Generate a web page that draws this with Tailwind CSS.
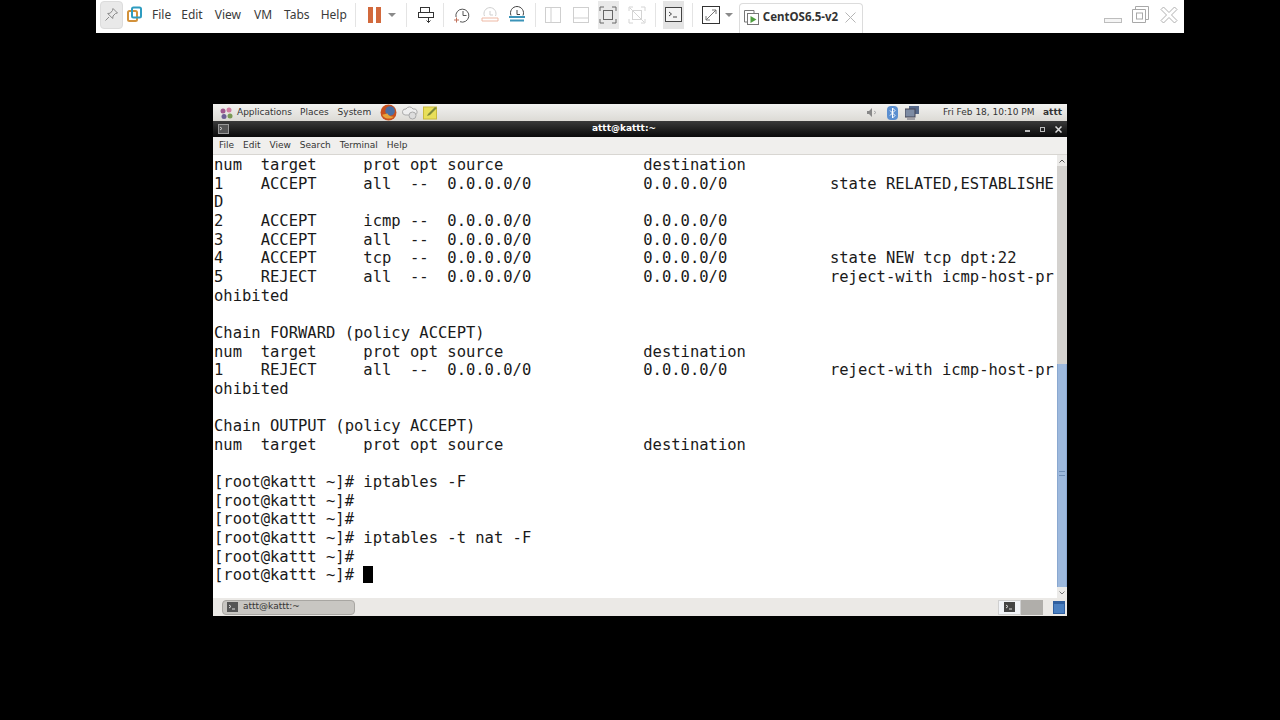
<!DOCTYPE html>
<html lang="en">
<head>
  <meta charset="UTF-8">
  <title>CentOS6.5-v2</title>
  <script src="https://cdn.jsdelivr.net/npm/@tailwindcss/browser@4"></script>
</head>
<body class="bg-black h-[720px] w-[1280px] overflow-hidden font-['Noto_Sans',sans-serif]">

  <!-- vmware toolbar -->
  <div class="w-[1088px] h-[33px] ml-[96px] pb-[4px] bg-white flex items-center text-[12px] text-[#3a3a3a]">
    <div class="w-[23px] h-[28px] ml-[4px] bg-[#e9e9e9] border border-[#dcdcdc] rounded-sm flex items-center justify-center">
      <svg width="15" height="15" viewBox="0 0 15 15" fill="none" stroke="#8a8a8a"><path d="M9 1.500l4.500 4.500-2 .5-2.500 2.500-.3 2.500-5-5 2.500-.3L8.500 3.500z M5 10l-3.500 3.500"/></svg>
    </div>
    <svg class="ml-[4px]" width="15" height="17" viewBox="0 0 15 17" fill="none"><rect x="1" y="5" width="9" height="10" rx="1.500" stroke="#d2913a" stroke-width="2"/><rect x="5" y="1.500" width="9" height="10" rx="1.500" stroke="#2e9cc0" stroke-width="2"/></svg>
    <span class="ml-[10px]">File</span>
    <span class="ml-[10px]">Edit</span>
    <span class="ml-[12px]">View</span>
    <span class="ml-[13px]">VM</span>
    <span class="ml-[12px]">Tabs</span>
    <span class="ml-[11px]">Help</span>
    <div class="w-px h-[24px] bg-[#e4e4e4] ml-[8px]"></div>
    <div class="flex gap-[3px] ml-[12px]"><div class="w-[5px] h-[16px] bg-[#d2693c]"></div><div class="w-[5px] h-[16px] bg-[#d2693c]"></div></div>
    <div class="ml-[7px] w-0 h-0 border-x-[4px] border-x-transparent border-t-[4px] border-t-[#8a8a8a]"></div>
    <div class="w-px h-[24px] bg-[#e4e4e4] ml-[10px]"></div>
    <svg class="ml-[10px]" width="18" height="18" viewBox="0 0 18 18" fill="none" stroke="#333"><rect x="3.500" y="1.500" width="9" height="5"/><rect x="1.500" y="6.500" width="15" height="5"/><path d="M11.500 11.500v5M9.500 14.500l2 2 2-2"/></svg>
    <div class="w-px h-[24px] bg-[#e4e4e4] ml-[8px]"></div>
    <svg class="ml-[9px]" width="18" height="18" viewBox="0 0 18 18" fill="none" stroke="#555"><path d="M3 11a6.500 6.500 0 1 1 4 4.700M10 5v4.500h3.500"/><path d="M1 14h5M3.500 11.500v5" stroke="#c0705a"/></svg>
    <svg class="ml-[10px]" width="18" height="18" viewBox="0 0 18 18" fill="none" stroke="#cfcfcf"><path d="M3.500 10a6 6 0 1 1 11 0M9 5v4h3"/><path d="M1 12h16v3H1z" stroke="#eeb9a5"/></svg>
    <svg class="ml-[9px]" width="18" height="18" viewBox="0 0 18 18" fill="none" stroke="#444"><path d="M3 9.500a6.500 6.500 0 1 1 12 0M9 4v4.500h3"/><path d="M1 11h16M2 14.500h14" stroke="#3b93b8" stroke-width="2"/></svg>
    <div class="w-px h-[24px] bg-[#e4e4e4] ml-[9px]"></div>
    <svg class="ml-[8px]" width="18" height="18" viewBox="0 0 18 18" fill="none" stroke="#cfcfcf"><rect x="1.500" y="1.500" width="15" height="15"/><path d="M7 1.500v15"/></svg>
    <svg class="ml-[10px]" width="18" height="18" viewBox="0 0 18 18" fill="none" stroke="#cfcfcf"><rect x="1.500" y="1.500" width="15" height="15"/><path d="M1.500 12h15"/></svg>
    <div class="ml-[8px] w-[21px] h-[28px] bg-[#e9e9e9] flex items-center justify-center">
      <svg width="18" height="18" viewBox="0 0 18 18" fill="none" stroke="#666"><rect x="4.500" y="4.500" width="9" height="9"/><path d="M1 5V1h4M13 1h4v4M17 13v4h-4M5 17H1v-4"/></svg>
    </div>
    <svg class="ml-[9px]" width="18" height="18" viewBox="0 0 18 18" fill="none" stroke="#d4d4d4"><rect x="4.500" y="4.500" width="9" height="9"/><path d="M1 5V1h4M13 1h4v4M17 13v4h-4M5 17H1v-4M2 2l14 14"/></svg>
    <div class="w-px h-[24px] bg-[#e4e4e4] ml-[9px]"></div>
    <div class="ml-[7px] w-[21px] h-[28px] bg-[#e4e4e4] flex items-center justify-center">
      <svg width="17" height="15" viewBox="0 0 17 15" fill="none" stroke="#444"><rect x=".5" y=".5" width="16" height="14" fill="#f4f4f4"/><path d="M4 5l2.500 2L4 9M8 10h4"/></svg>
    </div>
    <div class="w-px h-[24px] bg-[#e4e4e4] ml-[8px]"></div>
    <svg class="ml-[9px]" width="18" height="18" viewBox="0 0 18 18" fill="none" stroke="#333"><rect x=".5" y=".5" width="17" height="17"/><path d="M4 14L14 4M10 4h4v4M4 10v4h4" stroke="#777"/></svg>
    <div class="ml-[5px] w-0 h-0 border-x-[4px] border-x-transparent border-t-[4px] border-t-[#8a8a8a]"></div>
    <div class="ml-[6px] w-[124px] h-[30px] self-end -mb-[4px] pb-[3px] border border-b-0 border-[#dcdcdc] rounded-t-sm flex items-center pl-[3px]">
      <svg width="17" height="17" viewBox="0 0 17 17" fill="none"><path d="M4 13H1.500V1.500H11V4" stroke="#777"/><rect x="4.500" y="4.500" width="11" height="11" stroke="#777"/><path d="M7.500 7v7l6-3.500z" fill="#4f9e3f"/></svg>
      <span class="ml-[3px] w-[82px] whitespace-nowrap font-bold text-[11.5px] text-[#333]">CentOS6.5-v2</span>
      <svg width="11" height="11" viewBox="0 0 11 11" stroke="#b5b5b5"><path d="M.5.5l10 10M10.500.5l-10 10"/></svg>
    </div>
    <div class="ml-auto flex items-center">
      <div class="w-[18px] h-[5px] mt-[11px] border border-[#bdbdbd] bg-[#f5f5f5]"></div>
      <svg class="ml-[10px]" width="17" height="17" viewBox="0 0 17 17" fill="none" stroke="#a8a8a8"><path d="M.5 3.500h13v13H.5zM3.500 3.500V.5h13v13h-3"/><rect x="4.500" y="7" width="6" height="6"/></svg>
      <svg class="ml-[11px] mr-[6px]" width="18" height="18" viewBox="0 0 18 18" fill="#fff" stroke="#b0b0b0"><path d="M1 3.500L3.500 1 9 6.500 14.500 1 17 3.500 11.500 9 17 14.500 14.500 17 9 11.500 3.500 17 1 14.500 6.500 9z"/></svg>
    </div>
  </div>

  <!-- guest desktop -->
  <div class="w-[854px] h-[512px] ml-[213px] mt-[71px] flex flex-col bg-white">

    <!-- gnome panel -->
    <div class="h-[17px] bg-gradient-to-b from-[#f2f2f0] to-[#dcdad5] flex items-center text-[9px] text-[#333] font-['DejaVu_Sans',sans-serif]">
      <svg class="ml-[6px]" width="15" height="14" viewBox="0 0 15 14"><circle cx="4" cy="5" r="2.500" fill="#a0588f"/><circle cx="10" cy="4" r="2.500" fill="#d07ca0"/><circle cx="5" cy="10.500" r="2.500" fill="#6d5f95"/><circle cx="11" cy="10" r="2.500" fill="#7a9a55"/></svg>
      <span class="ml-[3px]">Applications</span>
      <span class="ml-[8px]">Places</span>
      <span class="ml-[9px]">System</span>
      <svg class="ml-[9px]" width="17" height="17" viewBox="0 0 16 16"><circle cx="8" cy="8" r="7.500" fill="#c8501e"/><circle cx="9.500" cy="6.500" r="4.500" fill="#4a6fa5"/><path d="M2 10c2 4 8 5 11 2-3 0-5-1-6-3z" fill="#e8a33a"/></svg>
      <svg class="ml-[5px]" width="16" height="15" viewBox="0 0 16 15" fill="#eee" stroke="#aaa"><path d="M3 10a3 3 0 0 1 1-6 4 4 0 0 1 7 0 3 3 0 0 1 2 6z"/><circle cx="10.500" cy="10.500" r="3.500" fill="#ddd"/></svg>
      <svg class="ml-[5px]" width="15" height="15" viewBox="0 0 15 15"><rect x=".5" y="2" width="13" height="12" fill="#e8df5a" stroke="#c9b93c"/><path d="M5 9l7-7 2 1-7 7-3 1z" fill="#7d8a3a"/></svg>
      <div class="ml-auto flex items-center mr-[5px]">
        <svg width="11" height="13" viewBox="0 0 11 13"><path d="M1 5h2l3-3v9L3 8H1z" fill="#888"/><path d="M8 5l2 1.500L8 8" stroke="#aaa" fill="none"/></svg>
        <svg class="ml-[10px]" width="11" height="14" viewBox="0 0 11 14"><rect width="11" height="14" rx="4" fill="#5b8fd0"/><path d="M3 4.500l5 5L5.500 12V2L8 4.500l-5 5" stroke="#fff" fill="none"/></svg>
        <svg class="ml-[7px]" width="14" height="14" viewBox="0 0 14 14"><rect x="4" y="0" width="10" height="8" fill="#56698a"/><rect x="0" y="3" width="10" height="8" fill="#7d8ba3" stroke="#445"/><path d="M2 13h8" stroke="#667"/></svg>
        <span class="ml-[24px] w-[87px] whitespace-nowrap">Fri Feb 18, 10:10 PM</span>
        <span class="ml-[13px] font-bold">attt</span>
      </div>
    </div>

    <!-- title bar -->
    <div class="h-[16px] bg-gradient-to-b from-[#3a3a3a] to-[#0a0a0a] flex items-center text-white text-[9px] font-bold font-['DejaVu_Sans',sans-serif]">
      <svg class="ml-[5px]" width="11" height="10" viewBox="0 0 11 10"><rect x=".5" y=".5" width="10" height="9" fill="#555" stroke="#999"/><path d="M2 3l2 1.500L2 6" stroke="#ccc" fill="none"/></svg>
      <span class="flex-1 text-center pr-[6px]">attt@kattt:~</span>
      <div class="flex items-center gap-[10px] mr-[5px]">
        <div class="w-[5px] h-[1.500px] bg-[#bbb] mt-[4px]"></div>
        <div class="w-[5px] h-[5px] border border-[#bbb]"></div>
        <svg width="7" height="7" viewBox="0 0 7 7" stroke="#ddd" stroke-width="1.500"><path d="M.5.5l6 6M6.500.5l-6 6"/></svg>
      </div>
    </div>

    <!-- terminal menu -->
    <div class="h-[18px] bg-[#f0efed] border-b border-[#d8d6d2] flex items-center pl-[6px] gap-[9px] text-[9px] text-[#333] font-['DejaVu_Sans',sans-serif]">
      <span>File</span><span>Edit</span><span>View</span><span>Search</span><span>Terminal</span><span>Help</span>
    </div>

    <!-- terminal body -->
    <div class="h-[443px] flex">
      <pre class="flex-1 pl-px pt-px text-[15.5px] leading-[18.66px] text-[#1a1a1a] font-['DejaVu_Sans_Mono',monospace]">num  target     prot opt source               destination
1    ACCEPT     all  --  0.0.0.0/0            0.0.0.0/0           state RELATED,ESTABLISHE
D
2    ACCEPT     icmp --  0.0.0.0/0            0.0.0.0/0
3    ACCEPT     all  --  0.0.0.0/0            0.0.0.0/0
4    ACCEPT     tcp  --  0.0.0.0/0            0.0.0.0/0           state NEW tcp dpt:22
5    REJECT     all  --  0.0.0.0/0            0.0.0.0/0           reject-with icmp-host-pr
ohibited

Chain FORWARD (policy ACCEPT)
num  target     prot opt source               destination
1    REJECT     all  --  0.0.0.0/0            0.0.0.0/0           reject-with icmp-host-pr
ohibited

Chain OUTPUT (policy ACCEPT)
num  target     prot opt source               destination

[root@kattt ~]# iptables -F
[root@kattt ~]#
[root@kattt ~]#
[root@kattt ~]# iptables -t nat -F
[root@kattt ~]#
[root@kattt ~]# <span class="inline-block w-[9.33px] h-[17px] bg-black align-[-3px]"></span></pre>
      <!-- scrollbar -->
      <div class="w-[10px] flex flex-col bg-[#d4d2cf]">
        <div class="h-[11px] bg-[#ecebe9] flex items-center justify-center"><svg width="6" height="4" viewBox="0 0 6 4" fill="none" stroke="#555"><path d="M.5 3.500L3 1l2.500 2.500"/></svg></div>
        <div class="h-[198px]"></div>
        <div class="flex-1 bg-[#9db9dd] border-x border-[#8aa8d0] flex items-center justify-center pb-[4px]">
          <div class="w-[6px] h-[5px] border-y border-[#6f8fb8]"></div>
        </div>
        <div class="h-[11px] bg-[#ecebe9] flex items-center justify-center"><svg width="6" height="4" viewBox="0 0 6 4" fill="none" stroke="#777"><path d="M.5.5L3 3 5.500.5"/></svg></div>
      </div>
    </div>

    <!-- bottom panel -->
    <div class="h-[18px] bg-[#ebe9e6] flex items-center text-[9px] text-[#333] font-['DejaVu_Sans',sans-serif]">
      <div class="w-[133px] h-[15px] ml-[9px] bg-[#c8c6c2] border border-[#a8a6a2] rounded-sm flex items-center pl-[4px]">
        <svg width="11" height="10" viewBox="0 0 11 10"><rect width="11" height="10" fill="#555"/><path d="M2 3l2 1.500L2 6M5 7h3" stroke="#ddd" fill="none"/></svg>
        <span class="ml-[5px]">attt@kattt:~</span>
      </div>
      <div class="ml-auto w-[23px] h-[15px] bg-[#f2f4f8] border border-[#d0d0d0] flex items-center justify-center">
        <svg width="11" height="10" viewBox="0 0 11 10"><rect width="11" height="10" fill="#444"/><path d="M2 3l2 1.500L2 6M5 7h3" stroke="#ddd" fill="none"/></svg>
      </div>
      <div class="w-[22px] h-[15px] bg-[#b0aeaa]"></div>
      <div class="ml-[10px] mr-[2px] w-[12px] h-[13px] bg-[#4a7fc0] border border-[#2f5f9f] border-t-[3px]"></div>
    </div>
  </div>
</body>
</html>
